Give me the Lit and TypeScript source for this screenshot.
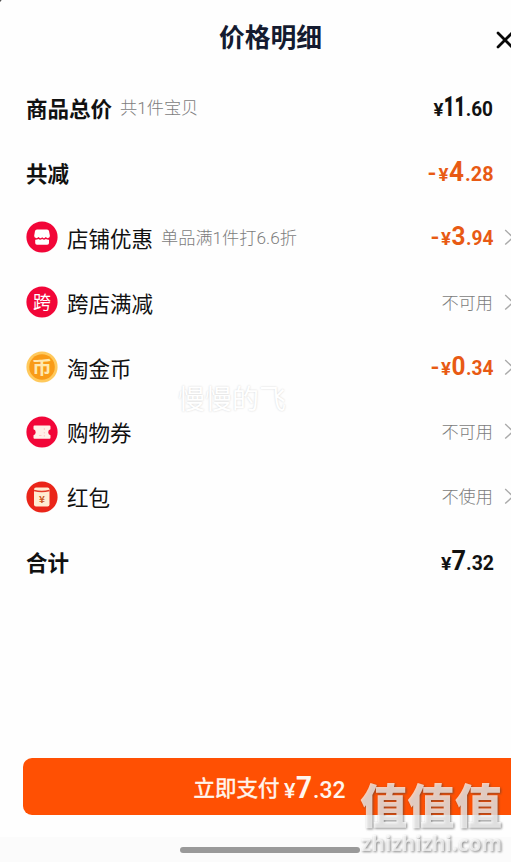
import { LitElement, html, svg, css, nothing } from "lit";
import { customElement, property } from "lit/decorators.js";

type Segment = { text: string; x: number; w: number; size: number; weight?: number };

/** Amount with a small currency sign, a tall integer part and small decimals. */
@customElement("price-text")
class PriceText extends LitElement {
  @property({ attribute: false }) segments: Segment[] = [];
  @property({ type: Number }) width = 72;
  @property({ type: Number }) baseline = 28;
  static styles = css`
    :host { display: block; }
    svg { display: block; overflow: visible; }
    text { font-family: Roboto, "Liberation Sans", sans-serif; fill: currentColor; }
  `;
  render() {
    return html`<svg width=${this.width} height="40">
      ${this.segments.map(
        (s) => svg`<text x=${s.x} y=${this.baseline} font-size=${s.size} font-weight=${s.weight ?? 700}
          textLength=${s.w} lengthAdjust="spacingAndGlyphs">${s.text}</text>`
      )}
    </svg>`;
  }
}

@customElement("row-icon")
class RowIcon extends LitElement {
  @property() kind = "";
  static styles = css`
    :host { display: block; width: 32px; height: 32px; }
    svg { display: block; }
    text { font-family: "Noto Sans CJK SC", sans-serif; text-anchor: middle; }
  `;
  glyph() {
    switch (this.kind) {
      case "shop":
        return svg`<circle cx="16" cy="16" r="15.6" fill="#f20638"/>
          <path d="M11 8.500h10q1.700 0 2 1.500l.9 4.800q.1 2-1.700 2.300-1.500.2-2.400-1-1.600 2-3.600.2-2 1.800-3.700-.2-1 1.200-2.500 1Q8 16.800 8.200 14.800l.8-4.800Q9.300 8.500 11 8.500Z" fill="#fff"/>
          <path d="M9.200 18.700q1.900.1 3.100-.8 1.700 1.500 3.800.1 2.100 1.400 3.800-.1 1.200.9 3.100.8v3.200q0 1.800-1.800 1.800H11q-1.800 0-1.800-1.800Z" fill="#fff"/>`;
      case "cross":
        return svg`<circle cx="16" cy="16" r="15.6" fill="#f20638"/>
          <text x="16" y="22.500" font-size="18" fill="#fff">跨</text>`;
      case "coin":
        return svg`<circle cx="16" cy="16" r="15.6" fill="#ffc95c"/>
          <circle cx="16" cy="16" r="12.800" fill="#f99b17"/>
          <text x="16" y="22.500" font-size="18.500" font-weight="700" fill="#ffe8ae" textLength="20" lengthAdjust="spacingAndGlyphs">币</text>`;
      case "ticket":
        return svg`<circle cx="16" cy="16" r="15.600" fill="#f20638"/>
          <path d="M8.500 9.500h15q1 0 1 1v2.700q-2.300.7-2.300 3t2.300 3v2.500q0 1-1 1h-15q-1 0-1-1v-2.500q2.200-.7 2.200-3t-2.200-3v-2.700q0-1 1-1Z" fill="#fff0e8"/>
          <path d="M18.300 12v2m0 2v1.500m0 1.500v1.700M13 19.500h2.500" stroke="#ffc9c6" stroke-width="1"/>`;
      default:
        return svg`<circle cx="16" cy="16" r="15.600" fill="#ea2519"/>
          <rect x="8" y="6.500" width="15.500" height="19" rx="2" fill="#ffecd2"/>
          <path d="M8 9.500q7.700 2 15.500 0" fill="none" stroke="#e43a29" stroke-width="1.300"/>
          <text x="16" y="21.500" font-size="10" font-weight="700" fill="#c9571f">¥</text>`;
    }
  }
  render() {
    return html`<svg width="32" height="32" viewBox="0 0 32 32">${this.glyph()}</svg>`;
  }
}

interface Row {
  label: string;
  note?: string;
  icon?: string;
  status?: string;
  accent?: boolean;
  arrow?: boolean;
  baseline?: number;
  price?: Segment[];
}

const discount = (n: string, cents: string): Segment[] => [
  { text: "-", x: 9.5, w: 9, size: 22 },
  { text: "¥", x: 20, w: 10, size: 18 },
  { text: n, x: 30.5, w: 14, size: 25 },
  { text: cents, x: 45, w: 27.5, size: 19.5, weight: 700 },
];

const ROWS: Row[] = [
  { label: "商品总价", note: "共1件宝贝", baseline: 27,
    price: [
      { text: "¥", x: 12.5, w: 10, size: 18 },
      { text: "11", x: 22.8, w: 21.5, size: 27, weight: 900 },
      { text: ".60", x: 44.7, w: 27.3, size: 19.5 },
    ] },
  { label: "共减", accent: true, baseline: 27,
    price: [
      { text: "-", x: 6.5, w: 9, size: 22 },
      { text: "¥", x: 17.5, w: 10, size: 18 },
      { text: "4", x: 28, w: 15, size: 27 },
      { text: ".28", x: 44, w: 28.5, size: 19.5, weight: 700 },
    ] },
  { label: "店铺优惠", note: "单品满1件打6.6折", icon: "shop", accent: true, arrow: true, baseline: 27, price: discount("3", ".94") },
  { label: "跨店满减", icon: "cross", status: "不可用", arrow: true },
  { label: "淘金币", icon: "coin", accent: true, arrow: true, baseline: 27, price: discount("0", ".34") },
  { label: "购物券", icon: "ticket", status: "不可用", arrow: true },
  { label: "红包", icon: "packet", status: "不使用", arrow: true },
  { label: "合计", baseline: 27.5,
    price: [
      { text: "¥", x: 20, w: 10.5, size: 18 },
      { text: "7", x: 30.5, w: 14.5, size: 27 },
      { text: ".32", x: 45, w: 28, size: 20 },
    ] },
];

const PAY: Segment[] = [
  { text: "¥", x: 0, w: 11.5, size: 20, weight: 500 },
  { text: "7", x: 12, w: 16, size: 31.5 },
  { text: ".32", x: 29, w: 32.5, size: 23.5, weight: 500 },
];

@customElement("app-root")
class AppRoot extends LitElement {
  static styles = css`
    :host {
      display: flex; flex-direction: column; position: relative;
      width: 511px; height: 862px; overflow: hidden; background: #fefefe; color: #111;
      font-family: "Noto Sans CJK SC", sans-serif;
    }
    .corner { position: absolute; left: -3px; top: -3px; width: 5px; height: 6px; background: #555; border-radius: 0 0 5px 0; }
    header { height: 76.500px; flex: none; display: flex; justify-content: center; box-sizing: border-box; padding: 16px 0 0 30px; position: relative; }
    h1 { margin: 0; font-size: 25.800px; line-height: 39px; font-weight: 700; color: #141b30; }
    .close { position: absolute; left: 495px; top: 31px; }
    .rows { flex: none; display: flex; flex-direction: column; padding: 0 0 0 26px; }
    .row { height: 64.800px; display: flex; align-items: center; }
    .label { font-size: 21.500px; line-height: 32px; white-space: nowrap; padding-bottom: 1px; }
    .bold { font-weight: 700; }
    row-icon { margin: -2px 9px 0 0; }
    .note { font-family: Roboto, "Noto Sans CJK SC", sans-serif; font-size: 17.200px; line-height: 26px; color: #7c7c7c; margin-left: 8px; font-weight: 300; white-space: nowrap; padding-bottom: 1px; }
    .value { margin-left: auto; height: 40px; display: flex; align-items: center; color: #111; }
    .accent { color: #e85a14; }
    .status { color: #7c7c7c; font-size: 17.200px; font-weight: 300; padding-bottom: 4px; }
    .end { width: 18px; height: 64px; display: flex; align-items: center; justify-content: flex-end; flex: none; }
    .end svg { width: 7px; height: 18px; margin-bottom: 3px; }
    .pay {
      margin: 163.200px -20px 0 23px; height: 57px; flex: none; border-radius: 9px; background: #ff5003; color: #fff6ee;
      display: flex; align-items: center; padding-left: 170.500px;
    }
    .pay .label { padding-top: 2px; -webkit-text-stroke: .5px currentColor; }
    .pay price-text { margin-left: 4.500px; }
    .nav { margin-top: 22px; flex: 1; background: #fbfbfb; display: flex; padding: 10px 0 0 179.500px; }
    .handle { width: 180.500px; height: 6px; border-radius: 3px; background: #999; }
    .faint { position: absolute; left: 178px; top: 378px; font-size: 27px; line-height: 40px; color: #fff; text-shadow: 0 0 2px #d2d2d2; }
    .mark { position: absolute; left: 359px; top: 774px; overflow: visible; color: rgba(255, 255, 255, .72); filter: drop-shadow(1.500px 1.500px 1px rgba(60, 60, 60, .8)); }
    .mark text { fill: currentColor; }
    .zh { font-family: "Noto Sans CJK SC", sans-serif; font-weight: 900; }
    .en { font-family: "Open Sans", sans-serif; font-weight: 700; }
  `;

  row(r: Row) {
    return html`<div class="row">
      ${r.icon ? html`<row-icon .kind=${r.icon}></row-icon>` : nothing}
      <span class="label ${r.icon ? "" : "bold"}">${r.label}</span>
      ${r.note ? html`<span class="note">${r.note}</span>` : nothing}
      <div class="value ${r.accent ? "accent" : ""}">
        ${r.price
          ? html`<price-text .segments=${r.price} .baseline=${r.baseline ?? 27}></price-text>`
          : html`<span class="status">${r.status}</span>`}
      </div>
      <div class="end">
        ${r.arrow
          ? html`<svg viewBox="0 0 7 18"><path d="M1.200 2 9 9.500 1.200 16.500" fill="none" stroke="#aaa" stroke-width="1.400"/></svg>`
          : nothing}
      </div>
    </div>`;
  }

  render() {
    return html`
      <div class="corner"></div>
      <header>
        <h1>价格明细</h1>
        <svg class="close" width="18" height="18"><path d="M3 2 17 16M17 2 3 16" stroke="#080808" stroke-width="2.700" stroke-linecap="round"/></svg>
      </header>
      <div class="rows">${ROWS.map((r) => this.row(r))}</div>
      <div class="pay">
        <span class="label">立即支付</span>
        <price-text .segments=${PAY} .baseline=${31} .width=${64}></price-text>
      </div>
      <div class="nav"><div class="handle"></div></div>
      <div class="faint">慢慢的飞</div>
      <svg class="mark" width="150" height="88">
        <text class="zh" x="1" y="49" font-size="47" textLength="142" lengthAdjust="spacingAndGlyphs">值值值</text>
        <text class="en" x="2" y="77" font-size="21.500" textLength="141" lengthAdjust="spacingAndGlyphs">zhizhizhi.com</text>
      </svg>
    `;
  }
}
